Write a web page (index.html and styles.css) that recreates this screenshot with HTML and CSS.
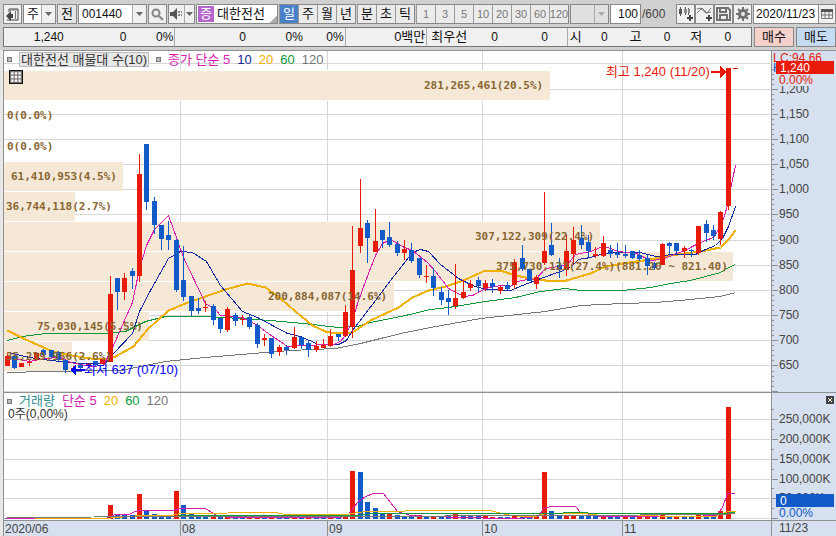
FILE: index.html
```html
<!DOCTYPE html>
<html lang="ko">
<head>
    <meta charset="UTF-8">
    <meta name="viewport" content="width=device-width, initial-scale=1.0">
    <title>대한전선 차트</title>
    <link rel="stylesheet" href="styles.css">
</head>
<body>
    <header class="toolbar">
        <button class="box icon-btn" aria-label="패널 접기">
            <svg width="13" height="13" viewBox="0 0 13 13"><path d="M3 4V1h9v11H6M1 12h5" fill="none" stroke="#444"/><path d="M0 8l5-5v3h2v4H5v3z" fill="#444"/><path d="M3 2h9M9.500 3v8" stroke="#777"/></svg>
        </button>
        <span class="box combo combo-kind">
            <select aria-label="종류"><option>주</option></select>
            <span class="arrow"><svg width="7" height="4" viewBox="0 0 7 4"><path d="M0 0h7L3.500 4z"/></svg></span>
        </span>
        <button class="box square">전</button>
        <span class="box combo combo-code">
            <input type="text" value="001440" aria-label="종목코드">
            <button class="arrow" aria-label="목록"><svg width="7" height="4" viewBox="0 0 7 4"><path d="M0 0h7L3.500 4z"/></svg></button>
        </span>
        <button class="box icon-btn" aria-label="검색">
            <svg width="13" height="13" viewBox="0 0 13 13" fill="none" stroke="#858585" stroke-width="2"><circle cx="5" cy="5" r="3.500"/><path d="M8 8l4 4"/></svg>
        </button>
        <span class="box combo combo-sound">
            <button class="plain" aria-label="소리"><svg width="13" height="12" viewBox="0 0 13 12"><path d="M0 4h3l4-4v12L3 8H0z" fill="#555"/><path d="M8 4h2M11 4h1M8 7h2M11 7h1" stroke="#888" stroke-width="2"/></svg></button>
            <button class="arrow" aria-label="소리 설정"><svg width="7" height="4" viewBox="0 0 7 4"><path d="M0 0h7L3.500 4z"/></svg></button>
        </span>
        <button class="box stock"><span class="tag">증</span><span>대한전선</span></button>
        <div class="group">
            <button class="active">일</button><button>주</button><button>월</button><button>년</button>
        </div>
        <div class="group">
            <button>분</button><button>초</button><button>틱</button>
        </div>
        <div class="group muted">
            <button>1</button><button>3</button><button>5</button><button>10</button><button>20</button><button>30</button><button>60</button><button>120</button>
        </div>
        <span class="box combo combo-empty">
            <select aria-label="분 간격" disabled><option></option></select>
            <span class="arrow"><svg width="7" height="4" viewBox="0 0 7 4"><path d="M0 0h7L3.500 4z"/></svg></span>
        </span>
        <input class="box count" type="text" value="100" aria-label="표시 개수">
        <span class="total">/600</span>
        <div class="tools">
            <button class="box icon-btn" aria-label="차트 추가"><svg width="15" height="14" viewBox="0 0 15 14"><path d="M2.500 0v9M7.500 0v8M10.500 1v7" stroke="#555"/><path d="M1 2h3v5H1z" fill="#555"/><path d="M6 2h3v4H6zM10 2h2v4h-2z" fill="#888"/><path d="M12 8v6M9 11h6" stroke="#444" stroke-width="2"/></svg></button>
            <button class="box icon-btn" aria-label="지표 추가"><svg width="15" height="14" viewBox="0 0 15 14" fill="none"><path d="M0 6l5-5 5 5 4-5M0 2l3-1 6 5 5-1" stroke="#777"/><path d="M12 8v6M9 11h6" stroke="#444" stroke-width="2"/></svg></button>
            <button class="box icon-btn" aria-label="저장"><svg width="15" height="14" viewBox="0 0 15 14" fill="none" stroke="#707070" stroke-width="2"><path d="M1 1h11l2 2v10H1z"/><path d="M4 1v4h6V1M4 13V8h7v5"/></svg></button>
            <button class="box icon-btn" aria-label="설정"><svg width="14" height="14" viewBox="0 0 14 14" fill="none" stroke="#707070"><circle cx="7" cy="7" r="3.500" stroke-width="3"/><path d="M7 0v3M7 11v3M0 7h3M11 7h3M2 2l2 2M10 10l2 2M12 2l-2 2M4 10l-2 2" stroke-width="2"/></svg></button>
        </div>
        <span class="box combo combo-date">
            <input type="text" value="2020/11/23" aria-label="날짜">
            <button class="plain" aria-label="달력"><svg width="12" height="10" viewBox="0 0 12 10"><path d="M0 0h12v3H0z" fill="#555"/><path d="M.5 3v6.500h11V3M4 3v6M8 3v6M1 6h10" fill="none" stroke="#777"/></svg></button>
        </span>
    </header>

    <div class="quote">
        <div class="quote-values">
            <span>1,240</span>
            <span>0</span>
            <span class="sep">0%</span>
            <span>0</span>
            <span>0%</span>
            <span class="sep">0%</span>
            <span class="sep name">0백만</span>
            <span class="name">최우선</span>
            <span>0</span>
            <span>0</span>
            <span class="sep"></span>
            <span class="name">시</span>
            <span>0</span>
            <span class="name">고</span>
            <span>0</span>
            <span class="name">저</span>
            <span>0</span>
            <span></span>
        </div>
        <button class="buy">매수</button>
        <button class="sell">매도</button>
    </div>

    <main class="charts">
        <section class="panel">
            <svg id="pricePlot" role="img" aria-label="가격 차트"></svg>
            <div class="legend">
                <i class="mark"></i>
                <span class="legend-title">대한전선 매물대 수(10)</span>
                <i class="mark"></i>
                <span class="ma5">종가 단순 5</span>
                <span class="ma10">10</span>
                <span class="ma20">20</span>
                <span class="ma60">60</span>
                <span class="ma120">120</span>
            </div>
            <button class="table-btn" aria-label="표 보기"><svg width="10" height="10" viewBox="0 0 10 10"><path d="M0 .5h10M0 3.500h10M0 6.500h10M0 9.500h10M.5 0v10M3.500 0v10M6.500 0v10M9.500 0v10" stroke="#777"/></svg></button>
        </section>
        <svg id="priceAxis" class="axis"></svg>
        <section class="panel divided">
            <svg id="volumePlot" role="img" aria-label="거래량 차트"></svg>
            <div class="legend">
                <i class="mark"></i>
                <span class="vol">거래량</span>
                <span class="ma5">단순 5</span>
                <span class="ma20">20</span>
                <span class="ma60">60</span>
                <span class="ma120">120</span>
            </div>
            <div class="volume-now">0주(0,00%)</div>
        </section>
        <div class="axis-cell divided">
            <svg id="volumeAxis" class="axis"></svg>
            <button class="close" aria-label="닫기"><svg width="4" height="4" viewBox="0 0 4 4"><path d="M0 0l4 4M4 0L0 4" stroke="#fff"/></svg></button>
        </div>
        <svg id="timeAxis" class="time"></svg>
        <div class="time time-end">11/23</div>
    </main>
    <script src="chart.js"></script>
</body>
</html>
```

FILE: styles.css
```css
* {
    box-sizing: border-box;
}
body {
    margin: 0;
    height: 100vh;
    display: flex;
    flex-direction: column;
    overflow: hidden;
    background: #d0d0d0;
    color: #111;
    font-family: 'Liberation Sans', 'Noto Sans CJK KR', sans-serif;
    font-size: 12px;
    line-height: 16px;
}
button, input, select {
    font: inherit;
    color: inherit;
    margin: 0;
    padding: 0;
    border: 0;
    border-radius: 0;
    background: none;
    min-width: 0;
}
button {
    display: flex;
    align-items: center;
    justify-content: center;
    cursor: pointer;
    white-space: nowrap;
}
button, select, .name {
    font-size: 13px;
}
select {
    appearance: none;
}
svg {
    display: block;
    flex: none;
}

/* toolbar */
.toolbar {
    display: flex;
    align-items: center;
    gap: 1px;
    padding: 4px 0 3px 3px;
}
.box {
    height: 20px;
    flex: none;
    border: 1px solid #888;
    background: #f0f0f0;
}
.icon-btn {
    width: 19px;
}
.square {
    width: 20px;
    background: #e6e6e6;
}
.combo {
    display: flex;
    background: #fff;
}
.combo select, .combo input {
    flex: 1;
    width: 0;
    padding-left: 3px;
}
.arrow {
    width: 14px;
    display: flex;
    align-items: center;
    justify-content: center;
    border-left: 1px solid #aaa;
    background: #f0f0f0;
    fill: #666;
}
.plain {
    flex: 1;
    background: #f0f0f0;
}
.combo-kind {
    width: 33px;
}
.combo-code {
    width: 69px;
}
.combo-sound {
    width: 27px;
}
.combo-sound .arrow {
    width: 10px;
}
.stock {
    width: 82px;
    justify-content: flex-start;
    gap: 3px;
    padding-left: 1px;
    background: linear-gradient(135deg, #fff 0 92%, #aaa 92%);
}
.tag {
    width: 16px;
    background: #b566cc;
    color: #fff;
}
.group {
    display: flex;
    flex: none;
    height: 20px;
    border: 1px solid #888;
    border-left: 0;
}
.group button {
    width: 19px;
    border-left: 1px solid #999;
    background: #ebebeb;
}
.group .active {
    background: #4a80c8;
    color: #fff;
}
.muted {
    color: #777;
}
.muted button {
    font-size: 11px;
}
.combo-empty {
    width: 39px;
}
.combo-empty, .combo-empty .arrow {
    background: #e0e0e0;
    fill: #aaa;
}
.count {
    width: 31px;
    background: #fff;
    text-align: right;
    padding-right: 2px;
}
.total {
    color: #444;
}
.tools {
    display: flex;
    margin-left: auto;
}
.combo-date {
    width: 83px;
}
.combo-date .plain {
    flex: none;
    width: 17px;
    border-left: 1px solid #888;
}
.combo-date input {
    padding-left: 2px;
}

/* quote line */
.quote {
    display: flex;
    gap: 2px;
    height: 20px;
    margin: 0 0 3px 3px;
}
.quote-values {
    flex: 1;
    display: grid;
    grid-template-columns:
        minmax(0, 60fr) minmax(0, 63fr) minmax(0, 49fr) minmax(0, 71fr)
        minmax(0, 57fr) minmax(0, 43fr) minmax(0, 82fr) minmax(0, 40fr)
        minmax(0, 31fr) minmax(0, 50fr) minmax(0, 20fr) minmax(0, 14fr)
        minmax(0, 26fr) minmax(0, 34fr) minmax(0, 29fr) minmax(0, 32fr)
        minmax(0, 29fr) minmax(0, 20fr);
    align-items: stretch;
    text-align: right;
    line-height: 18px;
    border: 1px solid #777;
    background: #f0f0f0;
    white-space: nowrap;
}
.sep {
    border-right: 1px solid #aaa;
    padding-right: 1px;
}
.buy, .sell {
    width: 40px;
    border: 1px solid #888;
}
.buy {
    background: #f6d0ca;
}
.sell {
    background: #c5dbf2;
}

/* charts */
.charts {
    flex: 1;
    min-height: 0;
    display: grid;
    grid-template-columns: minmax(0, 1fr) 65px;
    grid-template-rows: minmax(0, 341fr) minmax(0, 128fr) 16px;
    border-top: 1px solid #909090;
    border-left: 1px solid #909090;
    box-shadow: -3px 0 #e8e8e8;
    margin-left: 3px;
    background: #fff;
}
.panel, .axis-cell {
    position: relative;
    min-height: 0;
    overflow: hidden;
}
.panel svg:first-child, .axis, svg.time {
    width: 100%;
    height: 100%;
}
.divided {
    border-top: 1px solid #909090;
}
.axis {
    background: #d6e0ee;
    border-left: 1px solid #909090;
    fill: #444;
}
.time {
    background: #d6e0ee;
    border-top: 1px solid #909090;
    fill: #444;
    color: #444;
}
.time-end {
    border-left: 1px solid #909090;
    padding-left: 7px;
    line-height: 15px;
}
.legend {
    position: absolute;
    top: 1px;
    left: 3px;
    display: flex;
    align-items: center;
    gap: 7px;
    font-size: 13px;
    line-height: 14px;
    white-space: nowrap;
}
.mark {
    width: 5px;
    height: 5px;
    border: 1px solid #777;
    background: #bbb;
}
.legend-title {
    padding: 0 1px;
    border: 1px solid #bbb;
    background: #e8e8e8;
    color: #333;
    line-height: 13px;
}
.ma5 { color: #d81cb0; }
.ma10 { color: #1428a0; }
.ma20 { color: #f0b000; }
.ma60 { color: #109838; }
.ma120 { color: #777; }
.vol { color: #309090; }
.volume-now {
    position: absolute;
    top: 13px;
    left: 4px;
    color: #333;
}
.table-btn {
    position: absolute;
    top: 19px;
    left: 5px;
    width: 14px;
    height: 14px;
    border: 1px solid #111;
    background: #fff;
}
.close {
    position: absolute;
    top: 3px;
    right: 2px;
    width: 8px;
    height: 8px;
    background: #444;
}

/* drawing */
.grid { stroke: #d6d6d6; }
.tick { stroke: #909090; }
.band { fill: #f6e8d6; }
.gap { fill: #fff; }
.band-text {
    font: bold 11px 'DejaVu Sans Mono', monospace;
    fill: #886633;
}
.up { fill: #e81a0a; }
.down { fill: #125ac8; }
.low-note { fill: #00f; }
.note { font-size: 13px; }
.on-mark { fill: #fff; }
.mask { fill: #d6e0ee; }
.line {
    fill: none;
    stroke: currentColor;
}
.thick { stroke-width: 2; }
```

FILE: chart.js
```js
const SVG = 'http://www.w3.org/2000/svg';

// x, high, body top, body bottom, low, up/down, volume top, volume up/down
const candles = [
    [7, 354, 356, 366, 366, 1, 518, 0], [14, 356, 356, 368, 369, 0, 518, 0], [21, 363, 363, 367, 367, 1, 518, 0],
    [29, 360, 362, 363, 366, 1, 518, 1], [36, 352, 353, 360, 361, 1, 518, 1], [43, 349, 350, 355, 355, 0, 518, 0],
    [51, 350, 350, 357, 358, 0, 518, 0], [58, 351, 352, 360, 361, 0, 518, 0], [65, 360, 360, 370, 373, 0, 518, 1],
    [73, 366, 368, 369, 371, 1, 518, 0], [80, 364, 365, 368, 370, 0, 518, 0], [88, 363, 364, 366, 367, 1, 518, 0],
    [95, 361, 361, 365, 366, 0, 518, 0], [102, 358, 359, 364, 364, 1, 518, 1], [110, 276, 294, 362, 362, 1, 505, 1],
    [117, 278, 278, 292, 310, 0, 514, 0], [124, 273, 278, 292, 300, 1, 514, 0], [132, 268, 271, 276, 289, 0, 515, 0],
    [139, 154, 174, 276, 282, 1, 494, 1], [146, 144, 144, 202, 210, 0, 511, 0], [154, 197, 201, 225, 234, 0, 514, 0],
    [161, 225, 225, 239, 250, 0, 516, 0], [168, 221, 235, 240, 250, 0, 516, 0], [176, 239, 240, 290, 292, 0, 491, 1],
    [183, 246, 280, 297, 301, 0, 505, 0], [191, 296, 296, 311, 316, 0, 513, 0], [198, 298, 308, 311, 314, 0, 515, 0],
    [205, 301, 307, 308, 312, 1, 516, 0], [213, 304, 306, 320, 325, 0, 515, 1], [220, 318, 318, 329, 333, 0, 516, 0],
    [227, 307, 309, 330, 332, 1, 516, 1], [235, 313, 315, 321, 326, 0, 516, 0], [242, 315, 319, 320, 325, 1, 517, 0],
    [249, 315, 317, 327, 329, 0, 516, 1], [257, 323, 325, 344, 348, 0, 516, 1], [264, 334, 338, 340, 346, 1, 517, 0],
    [271, 338, 338, 354, 358, 0, 516, 1], [279, 345, 347, 352, 356, 1, 517, 0], [286, 345, 347, 350, 355, 0, 517, 0],
    [294, 327, 337, 348, 349, 1, 516, 1], [301, 337, 337, 345, 349, 0, 517, 0], [308, 341, 343, 350, 357, 0, 516, 1],
    [316, 341, 346, 350, 352, 1, 517, 0], [323, 339, 345, 348, 348, 1, 517, 0], [330, 329, 336, 346, 347, 1, 516, 1],
    [338, 334, 334, 337, 341, 0, 517, 0], [345, 305, 312, 336, 337, 1, 514, 1], [352, 226, 270, 327, 338, 1, 471, 1],
    [360, 179, 228, 246, 253, 1, 472, 0], [367, 220, 223, 238, 263, 0, 502, 0], [375, 209, 241, 252, 252, 1, 508, 0],
    [382, 230, 230, 240, 248, 0, 514, 0], [389, 222, 237, 245, 247, 0, 514, 1], [397, 241, 244, 253, 256, 0, 515, 0],
    [404, 240, 249, 253, 260, 1, 516, 0], [411, 243, 250, 261, 263, 0, 516, 0], [419, 258, 258, 275, 278, 0, 515, 1],
    [426, 265, 276, 277, 283, 1, 516, 0], [433, 268, 276, 288, 296, 0, 516, 1], [441, 287, 292, 300, 305, 0, 516, 0],
    [448, 290, 298, 302, 315, 0, 516, 0], [455, 264, 298, 306, 309, 1, 514, 1], [463, 280, 292, 298, 299, 1, 516, 0],
    [470, 280, 284, 288, 291, 1, 516, 0], [478, 277, 280, 286, 292, 0, 516, 0], [485, 280, 283, 288, 291, 1, 516, 1],
    [492, 279, 283, 287, 293, 0, 517, 1], [500, 286, 287, 291, 294, 1, 517, 0], [507, 282, 285, 289, 290, 0, 517, 0],
    [514, 259, 262, 285, 289, 1, 515, 1], [522, 245, 258, 269, 271, 0, 516, 0], [529, 269, 269, 281, 281, 0, 516, 0],
    [536, 275, 277, 284, 289, 1, 516, 1], [544, 192, 251, 263, 265, 1, 472, 1], [551, 223, 245, 255, 256, 0, 511, 0],
    [559, 258, 265, 270, 278, 0, 515, 0], [566, 235, 251, 270, 276, 1, 515, 1], [573, 227, 240, 254, 265, 1, 515, 1],
    [581, 225, 238, 245, 249, 0, 516, 0], [588, 235, 242, 251, 257, 0, 516, 0], [595, 247, 254, 256, 258, 1, 516, 0],
    [603, 236, 243, 256, 257, 1, 515, 1], [610, 245, 250, 254, 258, 0, 517, 0], [617, 243, 253, 255, 258, 0, 517, 0],
    [625, 245, 254, 256, 258, 0, 517, 1], [632, 251, 251, 258, 259, 0, 517, 0], [639, 250, 255, 259, 261, 0, 517, 1],
    [647, 254, 258, 266, 275, 0, 515, 1], [654, 262, 263, 268, 270, 0, 517, 0], [662, 243, 244, 265, 265, 1, 515, 1],
    [669, 242, 243, 246, 254, 0, 517, 0], [676, 243, 243, 251, 254, 0, 516, 1], [684, 246, 248, 251, 258, 1, 517, 0],
    [691, 249, 250, 251, 257, 0, 517, 0], [698, 226, 226, 253, 255, 1, 515, 1], [706, 220, 224, 233, 242, 0, 517, 0],
    [713, 225, 230, 236, 240, 0, 517, 0], [720, 211, 212, 239, 245, 1, 511, 1], [728, 68, 68, 206, 210, 1, 407, 1]
];

// volume by price: top, right edge, text x, text
const bands = [
    [71, 550, 424, '281,265,461(20.5%)'],
    [101, 4, 7, '0(0.0%)'],
    [132, 4, 7, '0(0.0%)'],
    [162, 123, 11, '61,410,953(4.5%)'],
    [192, 75, 6, '36,744,118(2.7%)'],
    [222, 600, 475, '307,122,309(22.4%)'],
    [252, 733, 496, '375,730,123(27.4%)(881.20 ~ 821.40)'],
    [282, 394, 268, '200,884,087(14.6%)'],
    [312, 149, 37, '75,030,145(5.5%)'],
    [342, 72, 6, '35,239,956(2.6%)']
];

const priceLines = {
    ma120: '7,372 45,371 120,370 140,366 165,361 205,357 240,354 290,350 335,348 360,343 380,338 405,332 430,327 480,318 545,311 580,305 622,303 655,302 690,299 720,296 735,292',
    ma60: '7,340 22,336 45,333 105,333 125,331 145,321 165,316 205,316 240,318 270,320 303,323 338,327 357,326 370,322 405,315 430,309 448,307 485,301 515,297 540,291 565,288 580,290 622,290 650,287 670,283 690,280 705,276 720,272 728,267 735,264',
    'ma20 thick': '7,330 25,339 50,350 65,354 90,358 105,359 115,356 133,346 147,329 168,310 185,303 205,296 225,289 247,283 265,287 280,298 295,311 312,325 325,331 335,333 352,332 370,320 398,307 412,297 428,290 445,286 463,280 485,270 500,270 515,275 530,278 545,280 566,280 590,273 605,266 622,263 650,259 670,255 700,251 720,247 728,239 735,230',
    ma10: '8,352 29,357 50,360 80,363 105,363 113,353 132,333 139,311 150,290 168,258 180,251 192,252 206,261 220,285 242,311 257,317 287,333 300,336 318,344 338,344 346,340 352,330 375,300 390,280 405,261 412,252 420,249 428,251 440,264 458,278 472,285 485,289 510,290 522,285 535,280 543,277 560,271 570,267 578,259 590,257 603,253 620,252 640,252 655,256 672,254 695,254 705,249 715,245 722,238 728,226 735,206',
    ma5: '8,357 29,361 44,358 60,357 70,362 90,366 103,365 113,345 124,320 132,302 139,268 146,245 154,229 168,215 177,240 183,257 205,303 215,309 220,315 242,317 257,325 265,331 287,346 301,345 333,344 340,341 345,335 352,320 358,300 368,273 375,255 382,243 390,239 404,247 412,250 427,262 435,271 448,288 463,296 472,295 485,288 500,285 510,286 517,281 527,279 535,279 545,268 558,266 567,264 575,254 590,251 600,247 607,247 618,251 636,253 650,260 662,259 676,253 685,250 692,246 700,242 713,237 720,226 724,215 728,202 731,184 735,165'
};

const volumeLines = {
    ma5: '5,518 105,518 115,514 128,514 135,511 141,510 172,510 180,508 205,508 216,515 230,517 340,517 348,514 357,502 365,496 373,493 383,493 390,502 397,511 410,515 430,516 500,518 517,518 538,516 543,508 550,506 575,506 580,512 600,516 690,516 716,515 722,507 727,493 734,493',
    ma20: '34,518 105,518 140,515 170,515 180,513 275,512 285,514 345,514 365,511 400,511 410,510 490,510 505,514 520,516 535,516 545,513 585,513 600,515 715,516 728,511 735,511',
    ma60: '140,516 215,515 355,515 375,513 540,513 585,512 590,513 722,513 735,512',
    ma120: '7,517 180,516 330,516 560,515 720,514 735,513'
};

const months = [[180, '08'], [327, '09'], [482, '10'], [622, '11']];
const priceRows = [63, 89, 114, 139, 164, 189, 214, 240, 265, 290, 315, 340, 365, 391];
const priceLabels = ['', '1,200', '1,150', '1,100', '1,050', '1,000', '950', '900', '850', '800', '750', '700', '650', ''];
const volumeRows = [419, 439, 459, 479, 498, 518];
const volumeLabels = ['250,000K', '200,000K', '150,000K', '100,000K', '50,000K', ''];

// drawing helper for one svg; chart units are scaled to the size of the element
function pen(id, left, top, width, height) {
    const svg = document.getElementById(id);
    const sx = svg.clientWidth / width;
    const sy = svg.clientHeight / height;
    const X = x => (x - left) * sx;
    const Y = y => (y - top) * sy;
    svg.replaceChildren();

    function add(name, cls, attrs) {
        const el = document.createElementNS(SVG, name);
        el.setAttribute('class', cls);
        for (const key in attrs) el.setAttribute(key, attrs[key]);
        if (name !== 'text') el.setAttribute('shape-rendering', 'crispEdges');
        svg.appendChild(el);
        return el;
    }
    return {
        rect: (cls, x, y, w, h) => add('rect', cls, {x: X(x), y: Y(y), width: w * sx, height: h * sy}),
        hline: (cls, x1, x2, y) => add('path', cls, {d: `M${X(x1)} ${Math.floor(Y(y)) + 0.5}H${X(x2)}`}),
        vline: (cls, x, y1, y2) => add('path', cls, {d: `M${Math.floor(X(x)) + 0.5} ${Y(y1)}V${Y(y2)}`}),
        text: (cls, x, y, s) => { add('text', cls, {x: X(x), y: Y(y)}).textContent = s; },
        arrow: (cls, x, y, dir) => add('path', cls, {
            d: `M${X(x)} ${Y(y)}l${-6 * dir} -6v5h${-9 * dir}v2h${9 * dir}v5z`
        }),
        poly: (cls, pts) => add('polyline', 'line ' + cls, {
            points: pts.split(' ').map(p => p.split(',').map(Number)).map(([x, y]) => `${X(x) + 0.5},${Y(y) + 0.5}`).join(' ')
        })
    };
}

function drawPrice() {
    const p = pen('pricePlot', 4, 51, 767, 341);
    priceRows.forEach(y => p.hline('grid', 4, 770, y));
    months.forEach(([x]) => p.vline('grid', x, 51, 392));
    bands.forEach(([y, right]) => {
        if (right === 4) return;
        p.rect('gap', 4, y - 1, right - 4, 31);
        p.rect('band', 4, y, right - 4, 29);
    });
    for (const cls in priceLines) p.poly(cls, priceLines[cls]);
    candles.forEach(([x, high, top, bottom, low, up]) => {
        const cls = up ? 'up' : 'down';
        p.rect(cls, x, high, 1, low - high);
        p.rect(cls, x - 2, top, 5, bottom - top);
    });
    bands.forEach(([y, , x, s]) => p.text('band-text', x, y + 18, s));
    p.rect('up', 733, 68, 5, 1);
    p.text('up note', 606, 76, '최고 1,240 (11/20)');
    p.arrow('up', 726, 72, 1);
    p.text('low-note note', 84, 374, '최저 637 (07/10)');
    p.arrow('low-note', 70, 370, -1);
}

function drawPriceAxis() {
    const p = pen('priceAxis', 772, 51, 64, 341);
    for (let i = 1; i < priceRows.length; i++) {
        for (let k = 1; k < 5; k++) p.hline('tick', 772, 774, priceRows[i] - k * 5);
        p.hline('tick', 772, 778, priceRows[i]);
        p.text('', 779, priceRows[i] + 4, priceLabels[i]);
    }
    p.rect('mask', 775, 74, 60, 12);
    p.text('up', 773, 62, 'L');
    p.text('up', 780, 62, 'C:94.66');
    p.text('down', 773, 72, 'H');
    p.rect('up', 776, 61, 58, 13);
    p.text('on-mark', 780, 72, '1,240');
    p.text('up', 779, 84, '0.00%');
}

function drawVolume() {
    const p = pen('volumePlot', 4, 393, 767, 127);
    volumeRows.forEach(y => p.hline('grid', 4, 770, y));
    months.forEach(([x]) => p.vline('grid', x, 393, 520));
    candles.forEach(c => p.rect(c[7] ? 'up' : 'down', c[0] - 2, c[6], 5, 519 - c[6]));
    for (const cls in volumeLines) p.poly(cls, volumeLines[cls]);
}

function drawVolumeAxis() {
    const p = pen('volumeAxis', 772, 393, 64, 127);
    volumeRows.forEach((y, i) => {
        p.hline('tick', 772, 774, y - 10);
        p.hline('tick', 772, 778, y);
        p.text('', 779, y + 4, volumeLabels[i]);
    });
    p.rect('mask', 779, 507, 56, 11);
    p.rect('down', 776, 494, 58, 13);
    p.text('on-mark', 780, 505, '0');
    p.text('down', 779, 517, '0.00%');
}

function drawTime() {
    const p = pen('timeAxis', 4, 521, 767, 15);
    p.text('', 5, 533, '2020/06');
    months.forEach(([x, s]) => {
        p.vline('tick', x, 521, 536);
        p.text('', x + 2, 533, s);
    });
}

function draw() {
    drawPrice();
    drawPriceAxis();
    drawVolume();
    drawVolumeAxis();
    drawTime();
}
window.addEventListener('resize', draw);
draw();
```
